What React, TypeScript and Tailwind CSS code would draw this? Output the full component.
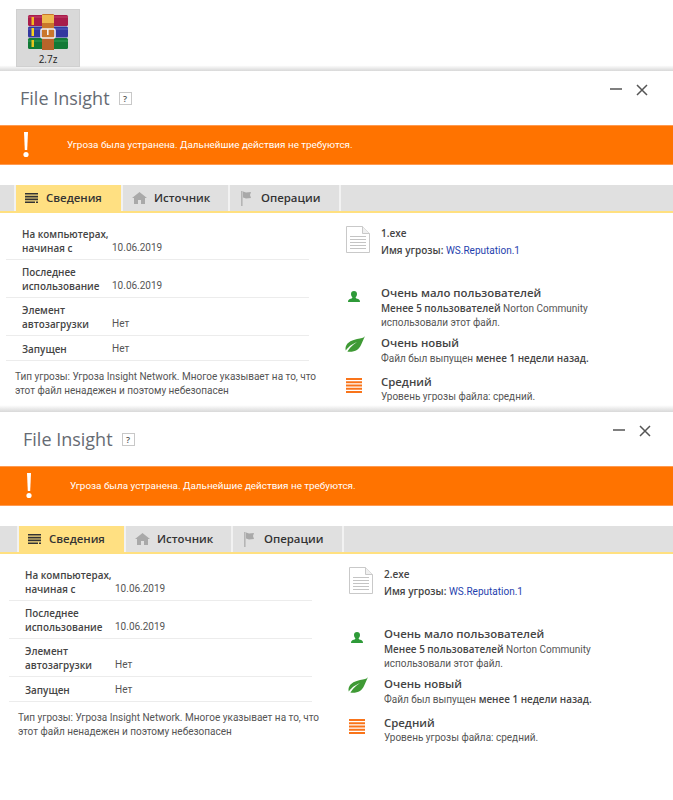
const font = { fontFamily: 'Roboto, "Open Sans", sans-serif' };
const headFont = { fontFamily: '"Open Sans", "Noto Sans", sans-serif' };

function RarIcon() {
  return (
    <svg width="42" height="36" viewBox="0 0 42 36">
      <rect x="1" y="1" width="40" height="11" rx="1.5" fill="#a81c4a" />
      <rect x="1" y="12.5" width="40" height="11" rx="1.5" fill="#33389f" />
      <rect x="1" y="24" width="40" height="11" rx="1.5" fill="#127a36" />
      <rect x="1" y="2" width="40" height="2" fill="#d2547a" opacity="0.35" />
      <rect x="1" y="14" width="40" height="2" fill="#6a6fd6" opacity="0.35" />
      <rect x="1" y="26" width="40" height="2" fill="#3fae63" opacity="0.35" />
      <rect x="4.5" y="3" width="2.5" height="8" fill="#f5b81e" />
      <rect x="4.5" y="14" width="2.5" height="8" fill="#f5d31e" />
      <rect x="4.5" y="26" width="2.5" height="7" fill="#e8c41e" />
      <rect x="15" y="0" width="12" height="36" rx="1" fill="#c9772b" />
      <path d="M15 1h12v8H15z" fill="#eeb84e" />
      <rect x="15" y="24" width="12" height="12" fill="#b8642a" />
      <rect x="14" y="15" width="14" height="9" rx="1.5" fill="none" stroke="#f2f2f2" strokeWidth="1.6" />
      <rect x="20" y="15" width="1.6" height="6" fill="#f2f2f2" />
    </svg>
  );
}

function ListIcon() {
  return (
    <svg width="13" height="10" viewBox="0 0 13 10" className="shrink-0">
      <path d="M0 0h13v1.6H0zM0 2.8h13v1.6H0zM0 5.6h13v1.6H0zM0 8.4h10v1.6H0zM11 8.4h2v1.6h-2z" fill="#333" />
    </svg>
  );
}

function HomeIcon() {
  return (
    <svg width="15" height="12" viewBox="0 0 15 12" className="shrink-0">
      <path d="M7.5 0L15 6h-2v6H9V8H6v4H2V6H0z" fill="#a9a9a9" />
    </svg>
  );
}

function FlagIcon() {
  return (
    <svg width="11" height="15" viewBox="0 0 11 15" className="shrink-0">
      <rect x="0" y="0" width="1.6" height="15" fill="#b5b5b5" />
      <path d="M2 .5l3 1 5-.5-1 3 1 3-5 .5-3-1z" fill="#a9a9a9" />
    </svg>
  );
}

function DocIcon() {
  return (
    <svg width="24" height="27" viewBox="0 0 24 27">
      <path d="M.5.5h16l7 7v19H.5z" fill="#fff" stroke="#c9c9c9" />
      <path d="M16.5.5v7h7" fill="#f0f0f0" stroke="#c9c9c9" />
      <path d="M4 10.5h16M4 13.5h16M4 16.5h16M4 19.5h16M4 22.5h16" stroke="#c4c4c4" />
    </svg>
  );
}

function UserIcon() {
  return (
    <svg width="12" height="11" viewBox="0 0 12 11">
      <path d="M6 0c1.9 0 3 1.3 3 3.1C9 4.8 8 6 7.6 6.4c0 .8 1.3 1 2.6 1.7 1 .5 1.8 1.1 1.8 2.9H0c0-1.8.8-2.4 1.8-2.9 1.3-.7 2.6-.9 2.6-1.7C4 6 3 4.8 3 3.1 3 1.3 4.1 0 6 0z" fill="#2e9a38" />
    </svg>
  );
}

function LeafIcon() {
  return (
    <svg width="21" height="19" viewBox="0 0 21 19">
      <path d="M21 0c-1 2-4 2-8 3C6 4.500 2 7.500 1.500 12c-.1 1 .1 2 .5 3 1 .5 2 .8 3.500.8C12 15.800 15 13 17 9c1.500-3 2.500-6 4-9z" fill="#3f9a35" />
      <path d="M0 19c1.500-6 6-10 13-13-5.500 3.500-9 7.500-11.500 13z" fill="#fff" />
    </svg>
  );
}

function LevelIcon() {
  return (
    <svg width="16" height="15" viewBox="0 0 16 15">
      <path d="M0 0h16v2H0zM0 3.250h16v2H0zM0 6.500h16v2H0zM0 9.750h16v2H0zM0 13h16v2H0z" fill="#f9741a" />
    </svg>
  );
}

const rows = [
  { label: 'На компьютерах, начиная с', value: '10.06.2019', pad: 'pt-0' },
  { label: 'Последнее использование', value: '10.06.2019', pad: 'pt-[5px]' },
  { label: 'Элемент автозагрузки', value: 'Нет', pad: 'pt-[5px]' },
  { label: 'Запущен', value: 'Нет', pad: 'pt-[6px]' },
];

function Insight({ file, second }: { file: string; second?: boolean }) {
  const shift = second ? 'pl-[3px]' : 'pl-0';

  return (
    <section
      className={
        second
          ? 'h-[388px] bg-white'
          : 'h-[341px] bg-gradient-to-b from-white from-[98%] to-[#d8d8d8]'
      }
    >
      <header className={`flex h-[54px] ${shift}`}>
        <div className="flex w-[600px] items-center pl-5" style={headFont}>
          <h1 className="text-[18px] leading-none text-[#666b73]">File Insight</h1>
          <span className="ml-[9px] flex h-[13px] w-[13px] items-center justify-center border border-[#c8c8c8] text-[9px] font-semibold leading-none text-[#555]">
            ?
          </span>
        </div>
        <div className="flex items-start gap-[14px] pl-[10px] pt-[13px]">
          <svg width="12" height="12" viewBox="0 0 12 12">
            <path d="M0 5h12" stroke="#555" strokeWidth="1.500" />
          </svg>
          <svg width="12" height="12" viewBox="0 0 12 12">
            <path d="M1 1l10 10M11 1L1 11" stroke="#555" strokeWidth="1.500" />
          </svg>
        </div>
      </header>

      <div className={`flex h-10 items-center border-y border-[#ff9a50] bg-[#ff7300] ${shift}`}>
        <svg width="10" height="26" viewBox="0 0 10 26" className="ml-[21px] shrink-0">
          <path d="M3 0h4l-.8 18H3.800z" fill="#fff" />
          <circle cx="5" cy="22.500" r="2.600" fill="#fff" />
        </svg>
        <p className="ml-9 text-[9.9px] text-white">Угроза была устранена. Дальнейшие действия не требуются.</p>
      </div>

      <nav className={`mt-5 flex h-[28px] border-b-2 border-[#ffe080] bg-[#e0e0e0] ${shift}`} style={headFont}>
        <div className="ml-[14px] flex w-[109px] items-center gap-[8px] border-x-2 border-[#f2f2f2] bg-[#ffe082] pl-[9px]">
          <ListIcon />
          <span className="text-[11.4px] font-semibold text-[#333]">Сведения</span>
        </div>
        <div className="flex w-[107px] items-center gap-[7px] border-r-2 border-[#f2f2f2] pl-[9px]">
          <HomeIcon />
          <span className="text-[11.4px] font-semibold text-[#333]">Источник</span>
        </div>
        <div className="flex w-[111px] items-center gap-[9px] border-r-2 border-[#f2f2f2] pl-[11px]">
          <FlagIcon />
          <span className="text-[11.4px] font-semibold text-[#333]">Операции</span>
        </div>
      </nav>

      <div className={`flex ${shift}`}>
        <div className="w-[340px] pt-[14px]">
          <div className="ml-[6px] w-[303px]">
            {rows.map((row) => (
              <div key={row.label} className={`flex items-end border-b border-[#ececec] pb-1 pl-4 ${row.pad}`}>
                <span className="w-[90px] text-[9.9px] font-semibold leading-[14px] text-[#444]" style={headFont}>
                  {row.label}
                </span>
                <span className="text-[10px] leading-[14px] text-[#555]">{row.value}</span>
              </div>
            ))}
          </div>
          <p className="ml-[15px] mt-[9px] w-[310px] text-[10px] leading-[14px] text-[#555]">
            Тип угрозы: Угроза Insight Network. Многое указывает на то, что этот файл ненадежен и поэтому небезопасен
          </p>
        </div>

        <div className="pl-[6px] pt-[13px]">
          <div className="flex">
            <div className="w-[35px] shrink-0">
              <DocIcon />
            </div>
            <div className="text-[10px] leading-[14px]">
              <div className="font-semibold text-[#444]" style={headFont}>
                {file}
              </div>
              <div className="mt-[3px] font-semibold text-[#444]" style={headFont}>
                Имя угрозы: <span className="font-normal text-[#1f3fae]" style={font}>WS.Reputation.1</span>
              </div>
            </div>
          </div>

          <div className="mt-[27px] flex">
            <div className="w-[35px] shrink-0 pl-[2px] pt-[6px]">
              <UserIcon />
            </div>
            <div className="text-[10px] leading-[14px] text-[#555]">
              <div className="text-[11.4px] font-semibold leading-[16px] text-[#444]" style={headFont}>
                Очень мало пользователей
              </div>
              <div>
                <b className="text-[9.9px] font-semibold text-[#444]" style={headFont}>Менее 5 пользователей</b> Norton Community
              </div>
              <div>использовали этот файл.</div>
            </div>
          </div>

          <div className="mt-[5px] flex">
            <div className="ml-[-2px] w-[37px] shrink-0 pt-[1px]">
              <LeafIcon />
            </div>
            <div className="text-[10px] leading-[14px] text-[#555]">
              <div className="text-[11.4px] font-semibold leading-[16px] text-[#444]" style={headFont}>
                Очень новый
              </div>
              <div>
                Файл был выпущен <b className="text-[9.9px] font-semibold text-[#444]" style={headFont}>менее 1 недели назад.</b>
              </div>
            </div>
          </div>

          <div className="mt-[7px] flex">
            <div className="w-[35px] shrink-0 pt-[5px]">
              <LevelIcon />
            </div>
            <div className="text-[10px] leading-[14px] text-[#555]">
              <div className="text-[11.4px] font-semibold leading-[17px] text-[#444]" style={headFont}>
                Средний
              </div>
              <div>Уровень угрозы файла: средний.</div>
            </div>
          </div>
        </div>
      </div>
    </section>
  );
}

export default function App() {
  return (
    <div className="h-[800px] w-[673px] overflow-hidden bg-white" style={font}>
      <div className="h-[71px] bg-gradient-to-b from-white from-[92%] to-[#d8d8d8] pl-4 pt-[9px]">
        <div className="flex h-[58px] w-[64px] flex-col items-center border border-[#d0d0d0] bg-[#d9d9d9] pt-1">
          <RarIcon />
          <span className="mt-[3px] text-[10px] leading-3 text-[#222]" style={headFont}>
            2.7z
          </span>
        </div>
      </div>
      <Insight file="1.exe" />
      <Insight file="2.exe" second />
    </div>
  );
}
